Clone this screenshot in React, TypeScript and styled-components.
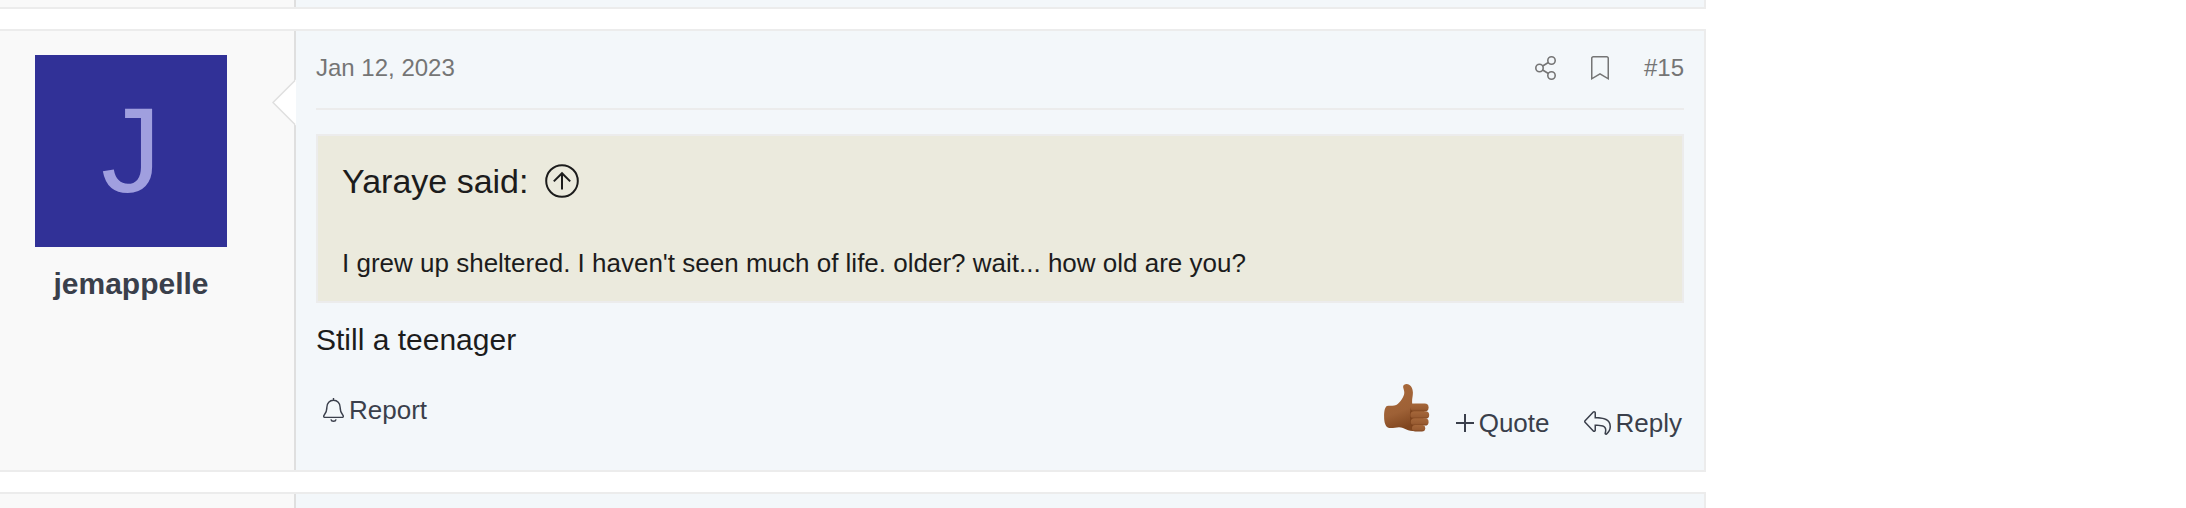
import React from "react";
import styled, { createGlobalStyle } from "styled-components";

const GlobalStyle = createGlobalStyle`
  *, *::before, *::after { box-sizing: border-box; }
  html { overflow: hidden; }
  body {
    margin: 0;
    background: #ffffff;
    color: #1c1c1c;
    font-family: "Liberation Sans", Arial, sans-serif;
    font-size: 26px;
    line-height: 36px;
  }
`;

const Thread = styled.main`
  display: flex;
  flex-direction: column;
  gap: 20px;
  padding-right: 480px;
`;

const Post = styled.article<{ $edge?: "top" | "bottom" }>`
  display: grid;
  grid-template-columns: 296px minmax(0, 1fr);
  min-height: ${(p) => (p.$edge === "top" ? "9px" : p.$edge === "bottom" ? "16px" : "0")};
  border: 2px solid #ececec;
  border-left: 0;
  border-top-width: ${(p) => (p.$edge === "top" ? "0" : "2px")};
  border-bottom-width: ${(p) => (p.$edge === "bottom" ? "0" : "2px")};
  background: #f3f7fa;
`;

const UserCell = styled.aside`
  position: relative;
  border-right: 2px solid #dfdfdf;
  background: #f9f9f9;
`;

const UserInfo = styled.div`
  display: flex;
  flex-direction: column;
  align-items: center;
  gap: 16px;
  padding: 24px 67px 24px 35px;
`;

const Avatar = styled.a`
  display: flex;
  align-items: center;
  justify-content: center;
  width: 192px;
  height: 192px;
  padding-bottom: 2px;
  background: #313197;
  color: #a09fdf;
  font-size: 120px;
  line-height: 190px;
  text-decoration: none;
`;

const UserName = styled.a`
  color: #3a3f4b;
  font-size: 30px;
  font-weight: 700;
  line-height: 42px;
  text-decoration: none;
`;

const Notch = styled.svg`
  position: absolute;
  top: 48px;
  right: -2px;
  width: 24px;
  height: 48px;
`;

const Body = styled.div`
  display: flex;
  flex-direction: column;
  padding: 20px 20px 29px;
`;

const Header = styled.header`
  display: flex;
  align-items: center;
  justify-content: space-between;
  padding-bottom: 23px;
  border-bottom: 2px solid #ececec;
  color: #757575;
  font-size: 24px;
  line-height: 34px;
`;

const HeaderActions = styled.div`
  display: flex;
  align-items: center;
  gap: 35px;
`;

const HeaderLink = styled.a`
  display: flex;
  align-items: center;
  color: inherit;
  text-decoration: none;
`;

const IconButton = styled.button`
  display: flex;
  padding: 0;
  border: 0;
  background: none;
  color: inherit;
  cursor: pointer;
`;

const Quote = styled.blockquote`
  margin: 24px 0 0;
  padding: 20px 24px;
  border: 2px solid #ececec;
  background: #ebeadd;
`;

const QuoteSource = styled.a`
  display: flex;
  align-items: center;
  gap: 17px;
  margin-bottom: 39px;
  color: inherit;
  font-size: 34px;
  line-height: 50px;
  text-decoration: none;
`;

const QuoteText = styled.p`
  margin: 0;
`;

const Message = styled.p`
  margin: 16px 0 0;
  font-size: 30px;
  line-height: 42px;
`;

const Footer = styled.footer`
  display: flex;
  align-items: flex-start;
  justify-content: space-between;
  margin-top: 23px;
`;

const LeftTools = styled.div`
  padding: 8px 7px 0;
`;

const RightTools = styled.div`
  display: flex;
  align-items: flex-end;
  gap: 34px;
  padding-right: 2px;
`;

const ToolButton = styled.button`
  display: flex;
  align-items: center;
  gap: 5px;
  padding: 0;
  border: 0;
  background: none;
  color: #3a3f4b;
  font: inherit;
  cursor: pointer;
`;

const ReactionButton = styled(ToolButton)`
  margin: 0 -8px 9px 0;
`;

const ShareIcon = () => (
  <svg width="21" height="24" viewBox="0 0 448 512" fill="none" stroke="currentColor" strokeWidth="34">
    <circle cx="352" cy="96" r="79" />
    <circle cx="96" cy="256" r="79" />
    <circle cx="352" cy="416" r="79" />
    <path d="M163 214 285 138M163 298l122 76" />
  </svg>
);

const BookmarkIcon = () => (
  <svg width="18" height="24" viewBox="0 0 384 512" fill="currentColor">
    <path d="M336 0H48C21.49 0 0 21.49 0 48v464l192-112 192 112V48c0-26.51-21.49-48-48-48zm16 456.287l-160-93.333-160 93.333V48c0-8.822 7.178-16 16-16h288c8.822 0 16 7.178 16 16v408.287z" />
  </svg>
);

const ArrowUpIcon = () => (
  <svg width="34" height="34" viewBox="0 0 34 34" fill="none" stroke="currentColor" strokeWidth="2">
    <circle cx="17" cy="17" r="15.8" />
    <path d="M17 25.6V9.4M8.8 17.4 17 9.2l8.2 8.2" />
  </svg>
);

const BellIcon = () => (
  <svg width="21" height="24" viewBox="0 0 21 24" fill="none" stroke="currentColor" strokeWidth="1.4" strokeLinejoin="round">
    <path d="M10.5 0v2.4M10.5 2.3c-3.9 0-6.6 2.9-6.6 6.8 0 4.900-1.100 6.100-2.700 7.900-1 1.200-.4 2.400.9 2.400h16.800c1.300 0 1.900-1.200.9-2.400-1.600-1.800-2.700-3-2.700-7.900 0-3.900-2.700-6.800-6.600-6.800zM7.900 21.300c.3 1.300 1.300 2 2.600 2s2.300-.7 2.600-2" />
  </svg>
);

const PlusIcon = () => (
  <svg width="18" height="24" viewBox="0 0 18 24" fill="none" stroke="currentColor" strokeWidth="2">
    <path d="M0 12h18M9 3v18" />
  </svg>
);

const ReplyIcon = () => (
  <svg width="27" height="24" viewBox="0 0 576 512" fill="currentColor">
    <path d="M11.093 251.65l175.998 184C211.81 461.494 256 444.239 256 408v-87.84c154.425 1.812 219.063 16.728 181.19 151.091-8.341 29.518 25.447 52.232 49.68 34.51C520.16 481.421 576 426.17 576 331.19c0-171.087-154.548-201.035-320-203.02V40.016c0-36.27-44.216-53.466-68.91-27.65L11.093 196.35c-14.791 15.47-14.791 39.83 0 55.3zm23.127-33.18l176-184C215.149 29.31 224 32.738 224 40v120c157.114 0 320 11.18 320 171.19 0 74.4-40 122.17-76.02 148.51C519.313 297.707 395.396 288 224 288v120c0 7.26-8.847 10.69-13.78 5.53l-176-184a7.978 7.978 0 0 1 0-11.06z" />
  </svg>
);

const ThumbIcon = () => (
  <svg width="46" height="48" viewBox="0 0 46 48">
    <defs>
      <linearGradient id="skin" x1="0" y1="0" x2="0.3" y2="1">
        <stop offset="0" stopColor="#a9693a" />
        <stop offset="0.65" stopColor="#9e6136" />
        <stop offset="1" stopColor="#80461f" />
      </linearGradient>
      <linearGradient id="finger" x1="0" y1="0" x2="0" y2="1">
        <stop offset="0" stopColor="#a5673a" />
        <stop offset="0.7" stopColor="#995c32" />
        <stop offset="1" stopColor="#7d431d" />
      </linearGradient>
    </defs>
    <path fill="url(#skin)" d="M19.200 3.600C18.600.9 21.300-.2 23.600.2c3.300.6 5.200 4.200 5.300 8.200.1 4.200-1.200 7-.7 11.200L38 22l-2 24.500c-4.600 1.100-10.300.5-13.600-1-2.300-1-4.400-2.200-7.400-2.200-3.600 0-6.200 1.200-9.800.7C1.300 43.400.1 38 .1 32.800c0-5.300.7-9.700 2.900-10.800 3-.9 6.400.3 9.200-1 4.200-2.700 8.100-8.600 8.100-12.300 0-2-.7-3.500-1.100-5.100z" />
    <path fill="#7d431d" d="M27 23c-1.600 5-1.600 16 1.500 22.400 3 .9 6.500 1.200 9.500.5l3-23.500z" />
    <rect x="26.600" y="19.600" width="18" height="8" rx="4" fill="url(#finger)" />
    <rect x="26.400" y="27.200" width="18.800" height="7.600" rx="3.800" fill="url(#finger)" />
    <rect x="26.800" y="34.200" width="17.800" height="7.400" rx="3.700" fill="url(#finger)" />
    <rect x="28" y="41" width="13.200" height="6.600" rx="3.300" fill="url(#finger)" />
  </svg>
);

const SpeechNotch = () => (
  <Notch viewBox="0 0 24 48" aria-hidden="true">
    <path d="M24 0.500 0.800 23.500 24 46.500z" fill="#fff" />
    <path d="M23 1.500 1 23.500l22 22" fill="none" stroke="#dfdfdf" strokeWidth="1.500" />
  </Notch>
);

export default function App() {
  return (
    <>
      <GlobalStyle />
      <Thread>
        <Post $edge="top">
          <UserCell />
        </Post>
        <Post>
          <UserCell>
            <UserInfo>
              <Avatar href="#jemappelle">J</Avatar>
              <UserName href="#jemappelle">jemappelle</UserName>
            </UserInfo>
            <SpeechNotch />
          </UserCell>
          <Body>
            <Header>
              <HeaderLink href="#post-15">
                <time dateTime="2023-01-12">Jan 12, 2023</time>
              </HeaderLink>
              <HeaderActions>
                <IconButton type="button" aria-label="Share">
                  <ShareIcon />
                </IconButton>
                <IconButton type="button" aria-label="Bookmark">
                  <BookmarkIcon />
                </IconButton>
                <HeaderLink href="#post-15">#15</HeaderLink>
              </HeaderActions>
            </Header>
            <Quote>
              <QuoteSource href="#post-14">
                Yaraye said: <ArrowUpIcon />
              </QuoteSource>
              <QuoteText>
                I grew up sheltered. I haven't seen much of life. older? wait... how old are you?
              </QuoteText>
            </Quote>
            <Message>Still a teenager</Message>
            <Footer>
              <LeftTools>
                <ToolButton type="button">
                  <BellIcon />
                  Report
                </ToolButton>
              </LeftTools>
              <RightTools>
                <ReactionButton type="button" aria-label="Like">
                  <ThumbIcon />
                </ReactionButton>
                <ToolButton type="button">
                  <PlusIcon />
                  Quote
                </ToolButton>
                <ToolButton type="button">
                  <ReplyIcon />
                  Reply
                </ToolButton>
              </RightTools>
            </Footer>
          </Body>
        </Post>
        <Post $edge="bottom">
          <UserCell />
        </Post>
      </Thread>
    </>
  );
}
